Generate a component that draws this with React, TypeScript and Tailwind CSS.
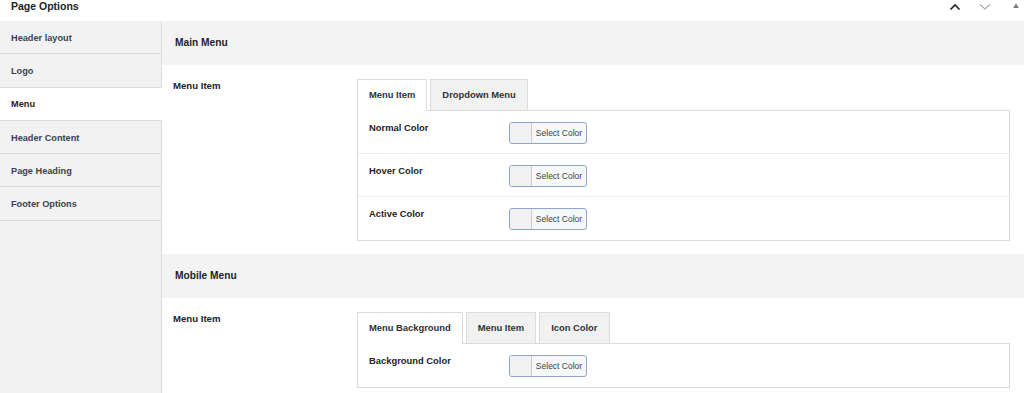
import type { ReactNode } from 'react';

const sideItems = ['Header layout', 'Logo', 'Menu', 'Header Content', 'Page Heading', 'Footer Options'];

function ColorButton() {
  return (
    <button className="flex h-[22px] w-[78px] items-stretch overflow-hidden rounded-[3px] border border-[#8da6c9] bg-[#f6f7f7]">
      <span className="w-[22px] border-r border-[#c9ccd0] bg-[#f1f1f1]" />
      <span className="flex flex-1 items-center justify-center text-[8.5px] text-[#3c434a]">Select Color</span>
    </button>
  );
}

function ColorRow({ label, last }: { label: string; last?: boolean }) {
  return (
    <div className={`flex h-[43px] items-start pl-[11px] pt-[11px] ${last ? '' : 'border-b border-[#ececec]'}`}>
      <div className="w-[140px] text-[9.4px] font-bold leading-[12px] text-[#1d2327]">{label}</div>
      <ColorButton />
    </div>
  );
}

function Tabs({ tabs, children }: { tabs: string[]; children: ReactNode }) {
  return (
    <div className="flex-1">
      <div className="flex gap-[3px]">
        {tabs.map((t, i) => (
          <div
            key={t}
            className={`flex h-[31px] items-center border border-b-0 border-[#dcdcde] px-[11px] text-[9.4px] font-bold text-[#2c3338] ${
              i === 0 ? 'relative z-10 -mb-px h-[32px] bg-white' : 'bg-[#f1f1f1]'
            }`}
          >
            {t}
          </div>
        ))}
      </div>
      <div className="border border-[#dcdcde]">{children}</div>
    </div>
  );
}

function Section({ title, tabs, rows }: { title: string; tabs: string[]; rows: string[] }) {
  return (
    <div>
      <div className="flex h-[44px] items-center bg-[#f3f3f3] pl-[13px] text-[10.2px] font-bold text-[#1d2327]">{title}</div>
      <div className="flex pb-[13px] pr-[14px] pt-[14px]">
        <div className="w-[195px] pl-[11px] pt-[1px] text-[9.6px] font-bold leading-[12px] text-[#1d2327]">Menu Item</div>
        <Tabs tabs={tabs}>
          {rows.map((r, i) => (
            <ColorRow key={r} label={r} last={i === rows.length - 1} />
          ))}
        </Tabs>
      </div>
    </div>
  );
}

export default function App() {
  return (
    <div className="h-[393px] w-[1024px] overflow-hidden bg-white font-['Liberation_Sans',Arial,sans-serif]">
      {/* Header */}
      <div className="flex h-[21px] items-start justify-between">
        <div className="pl-[11px] pt-[1px] text-[10.5px] font-bold leading-[11px] text-[#1d2327]">Page Options</div>
        <div className="flex items-start pr-[4px] pt-[2px]">
          <svg width="14" height="10" viewBox="0 0 14 10" className="mr-[16px]">
            <path d="M2.5 7.5 L7 3 L11.5 7.5" fill="none" stroke="#1d2327" strokeWidth="1.6" />
          </svg>
          <svg width="14" height="10" viewBox="0 0 14 10" className="mr-[20px]">
            <path d="M2 2.5 L7 7 L12 2.5" fill="none" stroke="#a7aaad" strokeWidth="1.2" />
          </svg>
          <svg width="8" height="8" viewBox="0 0 8 8">
            <path d="M4 1.5 L7 6 L1 6 Z" fill="#787c82" />
          </svg>
        </div>
      </div>

      <div className="flex">
        {/* Sidebar */}
        <div className="h-[372px] w-[162px] shrink-0 border-r border-[#dcdcde] bg-[#f2f2f2]">
          {sideItems.map((s) => (
            <div
              key={s}
              className={`flex h-[33.3px] items-center border-b border-[#dcdcde] pl-[11px] pt-[3px] text-[9.2px] font-bold ${
                s === 'Menu' ? '-mr-px bg-white text-[#1d2327]' : 'text-[#3c434a]'
              }`}
            >
              {s}
            </div>
          ))}
        </div>

        {/* Main */}
        <div className="flex-1">
          <Section title="Main Menu" tabs={['Menu Item', 'Dropdown Menu']} rows={['Normal Color', 'Hover Color', 'Active Color']} />
          <Section title="Mobile Menu" tabs={['Menu Background', 'Menu Item', 'Icon Color']} rows={['Background Color']} />
        </div>
      </div>
    </div>
  );
}
